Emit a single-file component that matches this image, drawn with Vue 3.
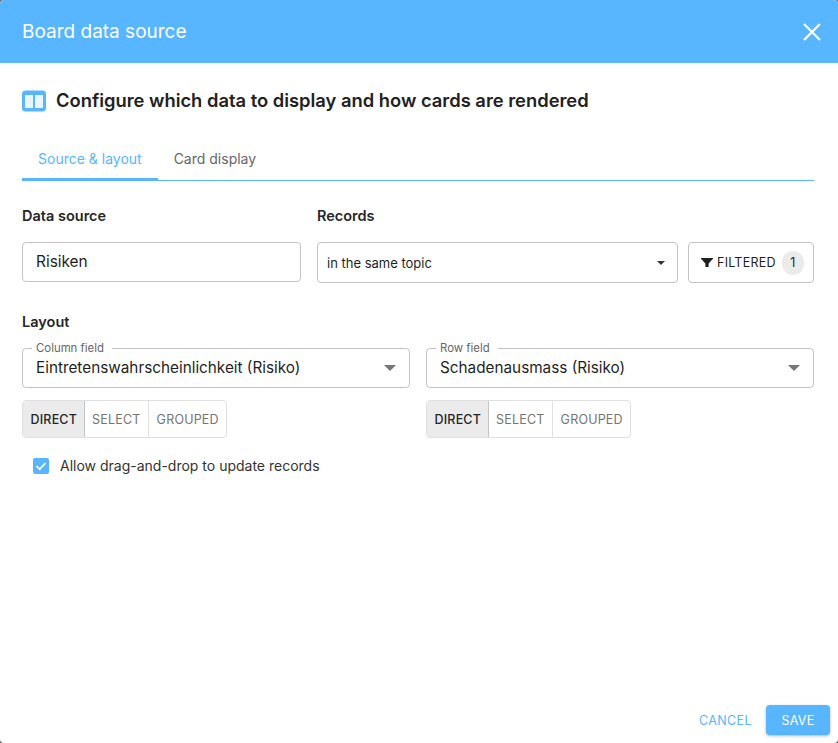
<script setup>
const modes = ['DIRECT', 'SELECT', 'GROUPED']
const fields = [
  { label: 'Column field', value: 'Eintretenswahrscheinlichkeit (Risiko)' },
  { label: 'Row field', value: 'Schadenausmass (Risiko)' },
]
</script>

<template>
  <div class="dialog">
    <header class="header">
      <h1 class="header-title">Board data source</h1>
      <svg class="close" width="20" height="20" viewBox="0 0 20 20" aria-label="Close">
        <path d="M2 2 L18 18 M18 2 L2 18" stroke="#fff" stroke-width="2.2" fill="none" />
      </svg>
    </header>

    <main class="content">
      <div class="heading">
        <svg width="24" height="22" viewBox="0 0 24 22">
          <rect width="24" height="21" y="0.5" rx="3.5" fill="#57b6ff" />
          <rect x="3" y="5" width="8" height="13" fill="#e8f5ff" />
          <rect x="13" y="5" width="8" height="13" fill="#e8f5ff" />
        </svg>
        <h2>Configure which data to display and how cards are rendered</h2>
      </div>

      <nav class="tabs">
        <span class="tab active">Source &amp; layout</span>
        <span class="tab">Card display</span>
      </nav>

      <section class="source-row">
        <div class="source-col">
          <div class="label">Data source</div>
          <div class="box input">Risiken</div>
        </div>
        <div class="records-col">
          <div class="label">Records</div>
          <div class="records-controls">
            <div class="box select-small">
              <span>in the same topic</span>
              <i class="caret small"></i>
            </div>
            <div class="box filter">
              <svg width="12" height="11" viewBox="0 0 12 11">
                <path d="M0 1 H12 V1.8 L7.6 6.6 V10 H4.4 V6.6 L0 1.8 Z" fill="#1f1f1f" />
              </svg>
              <span class="filter-text">FILTERED</span>
              <span class="count">1</span>
            </div>
          </div>
        </div>
      </section>

      <div class="label layout-label">Layout</div>
      <section class="field-row">
        <div v-for="f in fields" :key="f.label" class="field-col">
          <fieldset class="field">
            <legend>{{ f.label }}</legend>
            <span>{{ f.value }}</span>
            <i class="caret"></i>
          </fieldset>
          <div class="toggle-group">
            <span
              v-for="(m, i) in modes"
              :key="m"
              class="toggle"
              :class="{ selected: i === 0 }"
            >{{ m }}</span>
          </div>
        </div>
      </section>

      <div class="check-row">
        <span class="checkbox">
          <svg width="12" height="12" viewBox="0 0 12 12">
            <path d="M1.6 6.2 L4.7 9.2 L10.4 3" stroke="#fff" stroke-width="1.8" fill="none" />
          </svg>
        </span>
        <span>Allow drag-and-drop to update records</span>
      </div>
    </main>

    <footer class="footer">
      <span class="cancel">CANCEL</span>
      <span class="save">SAVE</span>
    </footer>
  </div>
</template>

<style>
html, body { margin: 0; background: #666; }
</style>

<style scoped>
.dialog {
  width: 838px;
  height: 743px;
  display: flex;
  flex-direction: column;
  background: #fff;
  border-radius: 4px;
  overflow: hidden;
  font-family: Inter, "Liberation Sans", sans-serif;
  color: #1f1f1f;
}
.header {
  height: 63px;
  flex: none;
  background: #57b6ff;
  color: #fff;
  display: flex;
  align-items: center;
  justify-content: space-between;
  padding: 0 16px 0 22px;
}
.header-title { margin: 0; font-size: 19px; font-weight: 400; line-height: 1; }
.content { flex: 1; padding: 0 24px 0 22px; display: flex; flex-direction: column; }
.heading { display: flex; align-items: center; gap: 10px; height: 24px; margin-top: 26px; }
.heading h2 { margin: 0 0 2px; font-size: 18.35px; font-weight: 600; line-height: 22px; color: #212121; }
.tabs { display: flex; margin-top: 20px; height: 47px; border-bottom: 1px solid #57b6ff; box-sizing: content-box; }
.tab {
  font-size: 14px;
  line-height: 20px;
  color: #666;
  padding: 16px 16px 0;
  box-sizing: border-box;
  height: 48px;
}
.active { color: #57b6ff; border-bottom: 3px solid #57b6ff; }
.source-row { display: flex; gap: 16px; margin-top: 26px; }
.source-col { width: 279px; }
.records-col { flex: 1; }
.label { font-size: 14.5px; font-weight: 600; line-height: 18px; color: #262626; }
.box {
  border: 1px solid #c4c4c4;
  border-radius: 4px;
  box-sizing: border-box;
  display: flex;
  align-items: center;
}
.input { height: 40px; margin-top: 17px; padding: 0 13px 2px; font-size: 15.4px; }
.records-controls { display: flex; gap: 10px; margin-top: 17px; }
.select-small { width: 361px; height: 41px; padding: 0 12px 0 9px; font-size: 13px; justify-content: space-between; }
.filter { width: 126px; height: 41px; padding: 0 9px 0 12px; font-size: 12.5px; font-weight: 400; }
.filter-text { margin-left: 4px; letter-spacing: 0.25px; }
.count {
  width: 22px;
  height: 24px;
  margin-left: 6px;
  border-radius: 12px;
  background: #ebebeb;
  display: flex;
  align-items: center;
  justify-content: center;
  font-size: 12.5px;
}
.caret {
  width: 0;
  height: 0;
  border-left: 6px solid transparent;
  border-right: 6px solid transparent;
  border-top: 6px solid #757575;
}
.caret.small { border-left-width: 4px; border-right-width: 4px; border-top: 4px solid #333; }
.layout-label { margin-top: 30px; }
.field-row { display: flex; gap: 16px; margin-top: 11px; }
.field-col:first-child { width: 388px; }
.field-col:last-child { flex: 1; }
.field {
  margin: 0;
  height: 46px;
  padding: 0 13px;
  border: 1px solid #c4c4c4;
  border-radius: 4px;
  display: flex;
  align-items: center;
  justify-content: space-between;
  box-sizing: border-box;
  font-size: 15.3px;
}
.field legend {
  padding: 0 8px 0 4px;
  margin-left: -4px;
  font-size: 11.4px;
  line-height: 13px;
  color: #666;
}
.field span { position: relative; top: -4px; }
.field .caret { position: relative; top: -3px; }
.toggle-group {
  display: inline-flex;
  margin-top: 12px;
  border: 1px solid #e0e0e0;
  border-radius: 4px;
  overflow: hidden;
  vertical-align: top;
}
.toggle {
  height: 36px;
  display: flex;
  align-items: center;
  padding: 0 7.5px;
  font-size: 12.5px;
  font-weight: 400;
  letter-spacing: 0.2px;
  color: #757575;
  border-left: 1px solid #e0e0e0;
}
.toggle:first-child { border-left: 0; }
.selected { background: #ebebeb; color: #262626; border-right: 1px solid #c4c4c4; font-weight: 500; padding-right: 6.5px; }
.selected + .toggle { border-left: 0; }
.check-row { display: flex; align-items: center; gap: 11px; margin: 16px 0 0 11px; font-size: 14px; line-height: 24px; color: #333; }
.checkbox {
  width: 16px;
  height: 16px;
  border-radius: 2px;
  background: #57b6ff;
  display: flex;
  align-items: center;
  justify-content: center;
}
.footer {
  display: flex;
  align-items: center;
  justify-content: flex-end;
  gap: 14px;
  padding: 0 8px 8px 0;
  font-size: 12.5px;
  font-weight: 400;
}
.cancel { color: #57b6ff; letter-spacing: 0.4px; }
.save {
  width: 64px;
  height: 30px;
  border-radius: 4px;
  background: #57b6ff;
  color: #fff;
  display: flex;
  align-items: center;
  justify-content: center;
  letter-spacing: 0.3px;
  box-shadow: 0 1px 3px rgba(0, 0, 0, 0.3);
}
</style>
